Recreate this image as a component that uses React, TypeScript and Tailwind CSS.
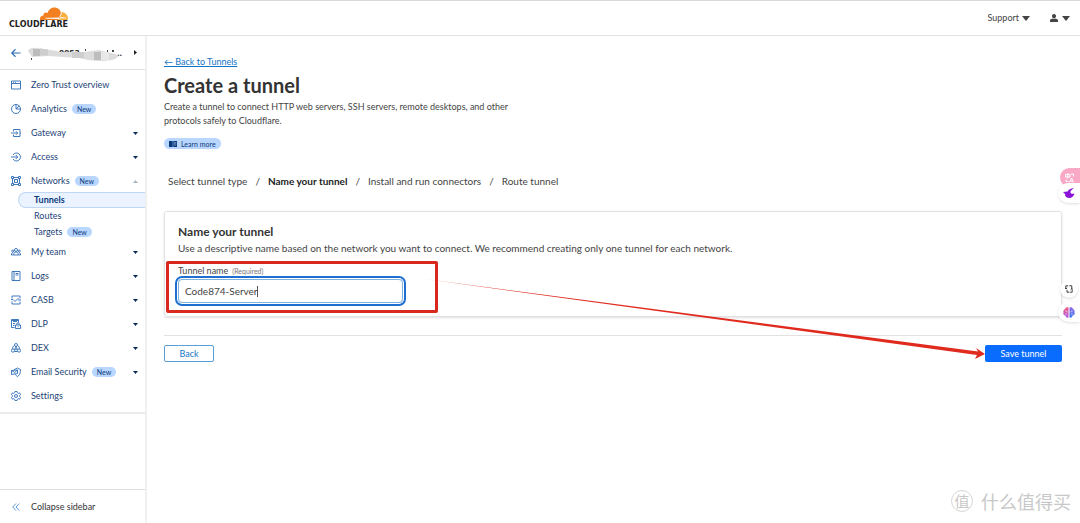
import React from "react";

interface NavItemProps {
  label: string;
  icon: React.ReactNode;
  isNew?: boolean;
  chevron?: "down" | "up";
}

const Icon: React.FC<{ children: React.ReactNode }> = ({ children }) => (
  <svg
    viewBox="0 0 20 20"
    className="size-[10px] shrink-0 text-[#2c6cb5]"
    fill="none"
    stroke="currentColor"
    strokeWidth="1.8"
    aria-hidden="true"
  >
    {children}
  </svg>
);

const NewBadge: React.FC = () => (
  <span className="rounded-full bg-[#b9d6ff] px-[5px] text-[7px] leading-[10px] text-[#0b3a7a]">
    New
  </span>
);

const Caret: React.FC<{ className: string; up?: boolean }> = ({
  className,
  up,
}) => (
  <svg viewBox="0 0 10 6" className={className} fill="currentColor" aria-hidden="true">
    <path d={up ? "M0 6 5 0l5 6z" : "M0 0h10L5 6z"} />
  </svg>
);

const NavItem: React.FC<NavItemProps> = ({ label, icon, isNew, chevron }) => (
  <a href="#" className="flex h-6 items-center pr-[7px] pl-[11px] text-[#1d4477]">
    <Icon>{icon}</Icon>
    <span className="ml-[10px]">{label}</span>
    {isNew && (
      <span className="ml-[5px] flex">
        <NewBadge />
      </span>
    )}
    {chevron && (
      <Caret
        up={chevron === "up"}
        className={
          chevron === "up"
            ? "ml-auto h-[3px] w-[5px] text-[#a9b4c3]"
            : "ml-auto h-[3px] w-[5px] text-[#0b2a58]"
        }
      />
    )}
  </a>
);

const topItems: NavItemProps[] = [
  {
    label: "Zero Trust overview",
    icon: <path d="M1 2h18v16H1zM1 7h18M4 4.5h2M8 4.5h2" />,
  },
  {
    label: "Analytics",
    isNew: true,
    icon: <path d="M10 1a9 9 0 1 0 9 9h-9zM10 10l6.500-6.500M10 1a9 9 0 0 1 9 9" />,
  },
  {
    label: "Gateway",
    chevron: "down",
    icon: <path d="M5 7V3h13v14H5v-4M0 10h13M10 6.500l3.500 3.500-3.500 3.500M18 10h2" />,
  },
  {
    label: "Access",
    chevron: "down",
    icon: <path d="M4 6a8 8 0 1 1 0 8M0 10h13M9.500 6l4 4-4 4" />,
  },
  {
    label: "Networks",
    isNew: true,
    chevron: "up",
    icon: (
      <>
        <path d="M1 1h4v4H1zM15 1h4v4h-4zM1 15h4v4H1zM15 15h4v4h-4zM5 3h10M5 17h10M3 5v10M17 5v10" />
        <path d="M7 7h6v6H7zM5 5l2 2M15 5l-2 2M5 15l2-2M15 15l-2-2" />
      </>
    ),
  },
];

const bottomItems: NavItemProps[] = [
  {
    label: "My team",
    chevron: "down",
    icon: (
      <>
        <circle cx="10" cy="6" r="3" />
        <circle cx="3.500" cy="8" r="2" />
        <circle cx="16.500" cy="8" r="2" />
        <path d="M5.500 16v-2c0-2.500 2-4 4.500-4s4.500 1.500 4.500 4v2zM5 16H1v-2c0-1.500 1-2.500 3-2.500M15 16h4v-2c0-1.500-1-2.500-3-2.500" />
      </>
    ),
  },
  {
    label: "Logs",
    chevron: "down",
    icon: <path d="M2 1h16v18H2zM6 1v18M9 5h6M9 8h6" />,
  },
  {
    label: "CASB",
    chevron: "down",
    icon: <path d="M2 7V2h16v5M2 13v5h16v-5M0 9h4l4 4 7-7M14 10h6" />,
  },
  {
    label: "DLP",
    chevron: "down",
    icon: (
      <>
        <path d="M7 17H1V1h14v6M4 5h8M4 9h4M4 13h3M1 3h14" />
        <path d="M9 12h10v7H9zM11.500 12v-2a2.500 2.500 0 0 1 5 0v2M14 14.500v2" />
      </>
    ),
  },
  {
    label: "DEX",
    chevron: "down",
    icon: (
      <>
        <circle cx="10" cy="4" r="3" />
        <circle cx="4" cy="15" r="3.300" />
        <circle cx="16" cy="15" r="3.300" />
        <circle cx="10" cy="11" r="2" />
        <path d="M10 7v2M8.500 12.500 6.500 13.500M11.500 12.500l2 1M7 5c-3 1.500-4 4-4 6.500M13 5c3 1.500 4 4 4 6.500M7 17h6" />
      </>
    ),
  },
  {
    label: "Email Security",
    isNew: true,
    chevron: "down",
    icon: (
      <>
        <path d="M6 5c3-.5 5-1.500 7-3 2 1.500 4 2.500 6 3 0 6-1 11-6 14-2-1-3.500-2.500-4.500-4.500" />
        <path d="M1 7l12-1v7L1 15zM1 7l6.500 4L13 6" />
      </>
    ),
  },
  {
    label: "Settings",
    icon: (
      <>
        <path d="M8 1h4l.7 2.500 2 1.100 2.500-.7 2 3.400-1.800 1.700v2.200l1.800 1.700-2 3.400-2.500-.7-2 1.100L12 19H8l-.7-2.300-2-1.100-2.500.7-2-3.400 1.800-1.700V9L.8 7.300l2-3.400 2.500.7 2-1.100z" />
        <circle cx="10" cy="10" r="3" />
      </>
    ),
  },
];

const Header: React.FC = () => (
  <header className="flex h-9 items-center justify-between border-t border-b border-t-[#d9d9d9] border-b-[#e2e2e2] pr-[10px] pl-[9px]">
    <a href="#" aria-label="Cloudflare" className="flex flex-col items-end text-[#222]">
      <svg viewBox="0 0 56 26" className="h-[13px] w-7" aria-hidden="true">
        <path
          fill="#f38020"
          d="M0 26c-1-5 2-9 7-9-1-5 4-8 8-5C18 3 25 0 31 1c6 1 10 5 11 11l-1 6c0 3-2 4-5 4l-23 1c0 1 1 1 2 1h23c-1 1-1 2-2 2z"
        />
        <path
          fill="#faae40"
          d="M43 10c7 0 13 6 13 13l-1 3H37c2-1 2-3 1-4l14-1-12-1c3-3 3-6 3-10z"
        />
        <path
          stroke="#fff"
          strokeWidth="1.200"
          fill="none"
          d="M10 22.500l25-1c4 0 6-3 7-10M38 26c1-2 2-3 5-3.500l10-.5"
        />
      </svg>
      <span className="font-['DejaVu_Sans',sans-serif] text-[8px] leading-[9px] font-bold">
        CLOUDFLARE
      </span>
    </a>
    <div className="flex items-center gap-5 text-[#444]">
      <button type="button" className="flex items-center gap-[3px]">
        Support
        <Caret className="h-[5px] w-2" />
      </button>
      <button type="button" aria-label="Account" className="flex items-center gap-1">
        <svg viewBox="0 0 16 16" className="size-2" fill="currentColor" aria-hidden="true">
          <path d="M8 0c3 0 4 2 4 4 0 3-2 5-4 5S4 7 4 4c0-2 1-4 4-4zM0 16v-3c0-2 2-3 5-4 2 1.500 4 1.500 6 0 3 1 5 2 5 4v3z" />
        </svg>
        <Caret className="h-[5px] w-2" />
      </button>
    </div>
  </header>
);

const Sidebar: React.FC = () => (
  <aside className="flex w-[147px] shrink-0 flex-col border-r-2 border-[#f0f0f0]">
    <div className="flex h-[34px] items-center border-b border-[#e2e2e2] pr-2 pl-[11px]">
      <a href="#" aria-label="Back to accounts">
        <Icon>
          <path d="M19 10H2M9 2.500 1.500 10 9 17.500" strokeWidth="2.200" />
        </Icon>
      </a>
      {/* account name, hidden behind a smudge */}
      <svg viewBox="0 0 96 18" className="ml-[7px] h-[18px] w-24" aria-hidden="true">
        <g fill="#333" className="font-['Open_Sans',sans-serif] text-[9px] font-bold">
          <text x="31" y="12">0953</text>
          <text x="89" y="12">..</text>
        </g>
        <path d="M3 14h1v2H3zM79 6h1v2h-1zM84 6h2v2h-2zM57 5h1v2h-1z" fill="#444" />
        <path
          d="M0 7q2-4 9-3l20 3 3 1 24 0 15-2 16 4 4 2-4 3q-6 2-16 2-10 0-20-3L20 12 4 13z"
          fill="#dcdcdc"
        />
        <path d="M5 5h7v7H5z" fill="#bcbcbc" />
        <path d="M12 4.500l8 1v6h-8zM44 8h12v6H44z" fill="#cdcdcd" />
        <path d="M66 8h7v8h-7z" fill="#bdbdbd" />
        <path d="M73 8h8v8h-8z" fill="#e8e8e8" />
      </svg>
      <svg viewBox="0 0 6 10" className="ml-auto h-[5px] w-[3px]" fill="#222" aria-hidden="true">
        <path d="M0 0l6 5-6 5z" />
      </svg>
    </div>

    <nav className="border-b-2 border-[#ececec] pt-[3px] pb-1" aria-label="Main">
      {topItems.map((item) => (
        <NavItem key={item.label} {...item} />
      ))}
      <div className="-mt-px text-[#1d4477]">
        <a
          href="#"
          aria-current="page"
          className="ml-[18px] flex h-4 items-center rounded-l-full border border-r-0 border-[#bfd7f2] bg-[#eaf3ff] pl-[15px] font-bold text-[#0b3a7a]"
        >
          Tunnels
        </a>
        <a href="#" className="flex h-4 items-center pl-[34px]">
          Routes
        </a>
        <a href="#" className="flex h-4 items-center gap-[5px] pl-[34px]">
          Targets
          <NewBadge />
        </a>
      </div>
      {bottomItems.map((item) => (
        <NavItem key={item.label} {...item} />
      ))}
    </nav>

    <button
      type="button"
      className="mt-auto flex h-[34px] items-center border-t border-[#dcdcdc] pl-3 text-[#333]"
    >
      <svg
        viewBox="0 0 16 16"
        className="size-2 text-[#4d8fd0]"
        fill="none"
        stroke="currentColor"
        strokeWidth="1.800"
        aria-hidden="true"
      >
        <path d="M8 1 1.500 8 8 15M14.500 1 8 8l6.500 7" />
      </svg>
      <span className="ml-[11px]">Collapse sidebar</span>
    </button>
  </aside>
);

const steps = [
  "Select tunnel type",
  "Name your tunnel",
  "Install and run connectors",
  "Route tunnel",
];

const Stepper: React.FC = () => (
  <ol className="mt-6 flex gap-2 pl-1 text-[10px] leading-4">
    {steps.map((step, i) => (
      <li key={step} className="flex gap-2">
        {i > 0 && <span>/</span>}
        <span className={i === 1 ? "font-bold text-[#222]" : ""}>{step}</span>
      </li>
    ))}
  </ol>
);

const NameCard: React.FC = () => (
  <section className="mt-[22px] rounded-[3px] border border-[#e2e2e2] px-[13px] pt-3 pb-[13px] shadow-sm">
    <h2 className="text-[12px] leading-4 font-bold text-[#333]">Name your tunnel</h2>
    <p className="text-[10px] leading-4">
      Use a descriptive name based on the network you want to connect. We
      recommend creating only one tunnel for each network.
    </p>
    <div className="relative mt-2 w-[228px]">
      <label htmlFor="tunnel-name" className="flex items-baseline gap-1 leading-[14px]">
        Tunnel name <span className="text-[7px] text-[#777]">(Required)</span>
      </label>
      <div className="relative pt-px">
        <input
          id="tunnel-name"
          type="text"
          defaultValue="Code874-Server"
          className="block h-6 w-[225px] rounded-[4px] border border-[#7fb2dc] px-[6px] text-[10px] text-[#444] ring-2 ring-[#1f6fd0] ring-offset-1 outline-none"
        />
        {/* text cursor */}
        <span className="absolute top-2 left-[79px] h-[11px] w-px bg-[#555]" />
      </div>
      <span className="pointer-events-none absolute -top-[3px] -right-[32px] -bottom-[10px] -left-[12px] rounded-[2px] border-[3px] border-[#d9291f]" />
    </div>
  </section>
);

const EdgeWidgets: React.FC = () => (
  <div className="absolute top-[168px] right-0 flex w-5 flex-col items-end">
    <button
      type="button"
      aria-label="Translate"
      className="flex h-[19px] w-5 items-center justify-center rounded-l-full bg-[#f9a8c6] text-white"
    >
      <svg viewBox="0 0 20 20" className="size-[10px]" fill="none" stroke="currentColor" strokeWidth="2" aria-hidden="true">
        <path d="M1 3h9v5H1zM5.500 0v11M12 2h5v5M2 13v4h5M9 19l4-9 4 9M10.500 16h5" />
      </svg>
    </button>
    <button
      type="button"
      aria-label="Assistant"
      className="-mt-1 flex h-5 w-[22px] shrink-0 items-center justify-center rounded-l-full bg-white shadow"
    >
      <svg viewBox="0 0 24 20" className="h-[10px] w-3" fill="#8a14d8" aria-hidden="true">
        <path d="M0 8l9-1c2-4 6-6 13-7-6 4-8 7-7 9 1 3 4 3 8 2-1 5-6 9-10 9-6 0-9-3-9-8z" />
      </svg>
    </button>
    <button
      type="button"
      aria-label="Capture"
      className="mt-[77px] mr-[2px] flex size-[18px] items-center justify-center rounded-full bg-white shadow"
    >
      <svg viewBox="0 0 20 20" className="size-2" fill="none" stroke="#333" strokeWidth="2.400" aria-hidden="true">
        <path d="M8 2H2v7M5 12v6h6M11 2h6v8M18 13v5h-5M0 7l2.500 3L5 7M14 12l3.500-3L20 12" />
      </svg>
    </button>
    <button
      type="button"
      aria-label="Brain"
      className="mt-1 flex h-5 w-[22px] shrink-0 items-center justify-center rounded-l-full bg-white shadow"
    >
      <svg viewBox="0 0 24 22" className="h-[11px] w-3" aria-hidden="true">
        <defs>
          <linearGradient id="brain-left" x1="0" y1="0" x2="0" y2="1">
            <stop offset="0" stopColor="#f0587c" />
            <stop offset="1" stopColor="#b05be8" />
          </linearGradient>
          <linearGradient id="brain-right" x1="0" y1="0" x2="0" y2="1">
            <stop offset="0" stopColor="#8f62e8" />
            <stop offset="1" stopColor="#3f7df0" />
          </linearGradient>
        </defs>
        <path fill="url(#brain-left)" d="M11 1v20c-4 1-6-1-6-4-4 0-5-3-4-6-1-4 1-6 3-7 1-3 4-4 7-3z" />
        <path fill="url(#brain-right)" d="M13 1v20c4 1 6-1 6-4 4 0 5-3 4-6 1-4-1-6-3-7-1-3-4-4-7-3z" />
        <path stroke="#fff" strokeWidth="1" fill="none" d="M4 8h4v3M4 14h4M20 8h-4v3M20 14h-4" />
      </svg>
    </button>
  </div>
);

const Watermark: React.FC = () => (
  <div className="absolute right-[9px] bottom-[10px] flex items-center gap-2 font-['Noto_Sans_CJK_SC',sans-serif] text-[#c8c8c8]">
    <span className="flex size-[22px] items-center justify-center rounded-full border border-[#d8d8d8] text-[15px] leading-5">
      值
    </span>
    <span className="text-[18px] leading-6">什么值得买</span>
  </div>
);

const App: React.FC = () => {
  return (
    <div className="relative flex min-h-screen flex-col bg-white font-[Lato,'Noto_Sans_CJK_SC',sans-serif] text-[9px] leading-3 text-[#444] [font-variant-ligatures:none]">
      <Header />
      <div className="flex flex-1">
        <Sidebar />
        <main className="relative min-w-0 flex-1 pt-5 pr-[18px] pl-[17px]">
          <a href="#" className="block w-fit text-[#1474c4] underline">
            ← Back to Tunnels
          </a>
          <h1 className="mt-[3px] text-[20px] leading-7 font-bold text-[#333]">
            Create a tunnel
          </h1>
          <p className="mt-px max-w-[364px] leading-[14px]">
            Create a tunnel to connect HTTP web servers, SSH servers, remote
            desktops, and other protocols safely to Cloudflare.
          </p>
          <a
            href="#"
            className="mt-[10px] flex h-[11px] w-fit items-center gap-1 rounded-full bg-[#b9d6ff] px-[5px] text-[7px] text-[#0b3a7a]"
          >
            <svg viewBox="0 0 16 12" className="h-[6px] w-2" aria-hidden="true">
              <path d="M0 0h7.500v12H0zM8.500 0H16v12H8.500z" fill="#0b3a7a" />
              <path d="M10 3h4.500M10 5.500h4.500M10 8h4.500" stroke="#b9d6ff" />
            </svg>
            Learn more
          </a>
          <Stepper />
          <NameCard />
          <div className="mt-[18px] flex justify-between border-t border-[#e2e2e2] pt-[9px]">
            <button
              type="button"
              className="h-[17px] w-[50px] rounded-[2px] border border-[#5a9fd6] text-[#1474c4]"
            >
              Back
            </button>
            <button
              type="button"
              className="h-[17px] w-[77px] rounded-[2px] bg-[#0a6cff] text-white"
            >
              Save tunnel
            </button>
          </div>
          {/* pointer from the name field to the save button */}
          <svg
            viewBox="0 0 560 84"
            preserveAspectRatio="none"
            className="pointer-events-none absolute top-[243px] right-[95px] left-[278px] h-[84px] w-[calc(100%-373px)]"
            fill="#e02a1e"
            aria-hidden="true"
          >
            <path d="M0 0 553 72.500l-2-3.500 9 6-10 5 2-4z" />
          </svg>
        </main>
      </div>
      <EdgeWidgets />
      <Watermark />
    </div>
  );
};

export default App;
